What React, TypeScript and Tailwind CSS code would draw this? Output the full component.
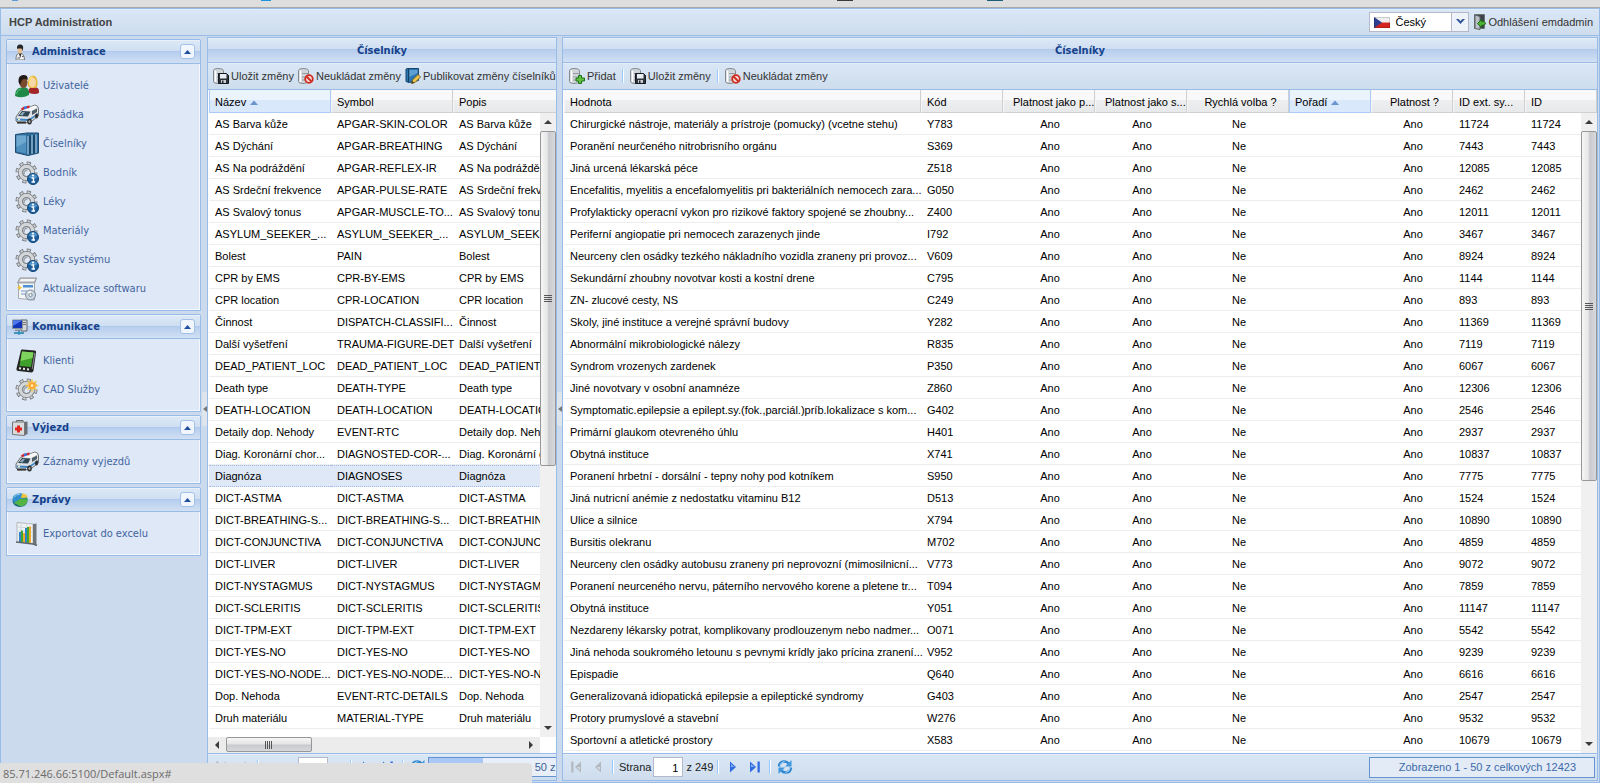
import React, { useState } from 'react';

const PANEL_HEADER =
  'bg-[linear-gradient(to_bottom,#f3f8fd_0px,#dce8f6_1px,#cfdff1_11px,#a9c4eb_11px,#b7ceee_12px,#d1e0f3_100%)]';
const TOOLBAR = 'bg-[linear-gradient(to_bottom,#eef4fb_0px,#d9e6f5_1px,#cedded_100%)]';

/* ---------- icons ---------- */

function UsersIcon() {
  return (
    <svg width="24" height="24" viewBox="0 0 24 24">
      <path d="M13 19 Q13 13 18.500 13 Q24 13 24 17 V19 Q20 21 14 19Z" fill="#a3262a" />
      <path d="M13 12 Q12 2 18 1.500 Q23 2 22.500 11 L21 14 H15Z" fill="#e8b83c" />
      <ellipse cx="17.500" cy="8.500" rx="3.500" ry="5" fill="#f7d9a8" />
      <path d="M14 8 Q14 2 18 2 Q15.500 5 15 9Z" fill="#f9e07a" />
      <path d="M0 22 Q0 14 6 13.500 L11 13.500 Q14.500 15 14 21 Q7 25 0 22Z" fill="#1f8a48" />
      <path d="M1.500 20 Q2 15.500 6 15" fill="none" stroke="#5cc27c" />
      <ellipse cx="8.500" cy="8.500" rx="4" ry="5.500" fill="#7a4a2c" />
      <path d="M3.500 8 Q3 1 8.500 1 Q13.500 1 12.500 6 Q9 4 7 6 L5 11Z" fill="#221a17" />
    </svg>
  );
}

function AmbulanceIcon() {
  return (
    <svg width="24" height="24" viewBox="0 0 24 24">
      <path d="M1 14 L5.500 7.500 L20 2 Q23.500 2.500 23.500 6 V13 L15 19.500 L3 20 Q0 19 1 14Z" fill="#dfe2e4" stroke="#6e7275" />
      <path d="M8 6.500 L20 2.500 L22.500 4 L15.500 8Z" fill="#f7f8f9" />
      <path d="M3 13 L7 8 L15.500 8.500 L13 13.500Z" fill="#2f4656" />
      <path d="M4.500 12 L7.500 9 L10 9 L7.500 12.500Z" fill="#8fa9b8" />
      <path d="M17 8 L22 5.500 V9 L17 12Z" fill="#4d5c66" />
      <path d="M1.500 15.500 L14 16 L23 10 V12 L14 18 L1.500 17.500Z" fill="#3a84c4" />
      <path d="M6 5.500 L9 3.500 V6 L7 7.500Z" fill="#d3272b" />
      <path d="M9 3.500 L12 3 V5.500 L9 6.500Z" fill="#3f6fd0" />
      <path d="M12 3 L14.500 2.500 V5 L12 5.500Z" fill="#d3272b" />
      <ellipse cx="14.500" cy="18.500" rx="2.300" ry="3" fill="#2c2c2c" />
      <ellipse cx="14.500" cy="18.500" rx="1" ry="1.500" fill="#aaa" />
      <ellipse cx="21.500" cy="13" rx="1.500" ry="2.500" fill="#2c2c2c" />
      <path d="M2 19.500 H11" stroke="#333" strokeWidth="2" />
      <circle cx="4" cy="16.500" r="1" fill="#fff6c0" />
    </svg>
  );
}

function BooksIcon() {
  return (
    <svg width="24" height="24" viewBox="0 0 24 24">
      <path d="M0.500 2.500 L12 1 L23.500 1 V21 L13 23.500 L0.500 20.500Z" fill="#2f6f9f" stroke="#1c4a70" />
      <path d="M1.500 3.500 L11 3.500 V21.500 L1.500 19.500Z" fill="#4f90bf" />
      <path d="M1.500 3.500 L11 3.500 V10 L1.500 15Z" fill="#6fa9d0" />
      <path d="M13 4 V22.500 M17 3 V21.800 M21 2.500 V21" stroke="#b4d2e6" />
      <path d="M15 3.500 V22.500 M19 3 V21.500" stroke="#153d5e" strokeWidth="1.500" />
    </svg>
  );
}

function Gear() {
  return (
    <>
      <circle cx="11.500" cy="11.500" r="9" fill="none" stroke="#6f7377" strokeWidth="4" strokeDasharray="3.800 3.268" />
      <circle cx="11.500" cy="11.500" r="8.500" fill="none" stroke="#cfd2d4" strokeWidth="3.500" strokeDasharray="2.200 4.475" strokeDashoffset="-0.700" />
      <circle cx="11.500" cy="11.500" r="6" fill="none" stroke="#74787c" strokeWidth="5" />
      <circle cx="11.500" cy="11.500" r="6" fill="none" stroke="#d3d6d8" strokeWidth="3.600" />
      <circle cx="11.500" cy="11.500" r="4" fill="#dfe8f6" stroke="#6f7377" />
      <path d="M9 13.500 Q8.500 9.500 12.500 9" fill="none" stroke="#9da2a6" strokeWidth="1.500" />
    </>
  );
}

function GearInfoIcon() {
  return (
    <svg width="24" height="24" viewBox="0 0 24 24">
      <Gear />
      <circle cx="18" cy="18" r="5.500" fill="#1d5f9c" stroke="#0f4577" />
      <path d="M13.500 16.500 Q15 13 18 13 Q21.500 13 22.500 16.500 Q18 18.500 13.500 16.500Z" fill="#4f92c9" />
      <path d="M16.500 17 H18.500 V21 M16.500 21 H20" stroke="#fff" strokeWidth="1.500" fill="none" />
      <circle cx="18" cy="14.500" r="1.100" fill="#fff" />
    </svg>
  );
}

function GearStarIcon() {
  return (
    <svg width="24" height="24" viewBox="0 0 24 24">
      <Gear />
      <path d="M17 0.500 L18.500 4 L22 2.500 L20.500 6 L24 7.500 L20.500 9 L22 12.500 L18.500 11 L17 14.500 L15.500 11 L12 12.500 L13.500 9 L10 7.500 L13.500 6 L12 2.500 L15.500 4Z" fill="#f7c343" opacity="0.900" />
      <circle cx="17" cy="7.500" r="3" fill="#ff9f2e" />
      <circle cx="17" cy="7.500" r="1.500" fill="#ffe9a0" />
    </svg>
  );
}

function PackageIcon() {
  return (
    <svg width="24" height="24" viewBox="0 0 24 24">
      <path d="M2.500 6 L5 1 H21.500 L19.500 6Z" fill="#c9cdd0" stroke="#8f9396" />
      <path d="M6 2 H20 L19 4 H5Z" fill="#f4f5f6" />
      <path d="M3.500 6 H19.500 V23 L3.500 21.500Z" fill="#f4f6f8" stroke="#a4a8ab" />
      <path d="M8 8 H18 V10.500 H8Z" fill="#4d8fd0" />
      <path d="M6 14 H12 M6 17 H11" stroke="#9ab8d8" strokeWidth="1.500" />
      <path d="M4.500 8 L5.500 10 L7.500 10.500 L5.500 11.500 L4.500 13.500 L3.500 11.500 L2 10.500 L3.500 10Z" fill="#f3c233" />
      <circle cx="15.500" cy="18" r="5" fill="#c9d5e0" stroke="#7c8b98" />
      <path d="M12.500 15.500 Q14 14 16 14 L15.500 18Z" fill="#fff" />
      <circle cx="15.500" cy="18" r="1.600" fill="#fff" stroke="#7c8b98" />
    </svg>
  );
}

function PdaIcon() {
  return (
    <svg width="24" height="24" viewBox="0 0 24 24">
      <path d="M6 1 Q6.300 0.300 7.500 0.500 L20 1.500 Q21.500 2 21 3.500 L18.500 21.500 Q18 23.500 16.500 23.500 L3.500 22 Q1 21.500 1.500 19.500Z" fill="#232625" />
      <path d="M7 2.500 L18.500 3.500 L16 18 L4.500 17Z" fill="#3f9f2a" />
      <path d="M7 2.500 L18.500 3.500 L17.500 9 L5.500 12Z" fill="#7ed35e" />
      <path d="M4 19.300 L6 19.500 M8 19.800 L10 20 M12 20.300 L14 20.500" stroke="#e6e6e6" strokeWidth="2" />
      <path d="M19.800 4 L17.200 20" stroke="#8b8f8e" />
    </svg>
  );
}

function ChartIcon() {
  return (
    <svg width="24" height="24" viewBox="0 0 24 24">
      <path d="M2 0.500 L18 2 V21.500 L2 20Z" fill="#f0f3f5" stroke="#b2b8bd" />
      <path d="M18 2 L21.500 1.500 V23 L18 21.500Z" fill="#6f7579" />
      <path d="M2 5 L18 6 M2 9 L18 10 M2 13 L18 14 M6 1 V20 M12 1 V20" stroke="#d0d7dc" />
      <path d="M4 10 H6 V20 H4Z M10 6 H12 V20.800 H10Z" fill="#2f83c7" />
      <path d="M6 8.500 H8 V20.500 H6Z M12 5 H14 V21 H12Z" fill="#3fa535" />
      <path d="M8 11 H10 V20.500 H8Z M14 4.500 H16 V21.500 H14Z" fill="#ecaa2c" />
      <path d="M1 20 L18 22 L22 23.500" fill="none" stroke="#5f6569" strokeWidth="1.500" />
    </svg>
  );
}

function DoctorIcon() {
  return (
    <svg width="16" height="16" viewBox="0 0 16 16">
      <path d="M4 16 Q3.500 9.500 8 9 Q12.500 9.500 12.500 16Z" fill="#f2f2f2" stroke="#777" />
      <path d="M7 9.500 L8.200 14 L9.500 9.500Z" fill="#222" />
      <path d="M5.500 14 H8 M10 12.500 H11.500" stroke="#555" />
      <ellipse cx="8" cy="6.500" rx="2.500" ry="3" fill="#e8bf95" />
      <path d="M5 5 Q4.500 0.500 8 0.500 Q12 0.500 11 5 L10.500 7 L9.500 4.500 H6Z" fill="#25272b" />
    </svg>
  );
}

function NetworkIcon() {
  return (
    <svg width="16" height="16" viewBox="0 0 16 16">
      <path d="M9 1 H15 V12 H9Z" fill="#d4d7da" stroke="#5f656b" />
      <path d="M11 3.500 H14 M11 5.500 H14" stroke="#777" />
      <path d="M0.500 1 H10.500 V9.500 H0.500Z" fill="#1334b8" stroke="#8b9299" />
      <path d="M1 1.500 H10 L1 7Z" fill="#4b78ee" />
      <path d="M3 10.500 H8 V12 H3Z" fill="#8a9096" />
      <path d="M2 14 H12 M7 12 V15.500" stroke="#237ba8" strokeWidth="1.500" />
      <circle cx="7" cy="14" r="1.600" fill="#2b95c4" />
    </svg>
  );
}

function FirstAidIcon() {
  return (
    <svg width="16" height="16" viewBox="0 0 16 16">
      <path d="M4.500 2.500 V0.500 H11 V2.500" fill="none" stroke="#666" />
      <path d="M12 2 L15.500 1.500 V14 L12 15.500Z" fill="#6a6f73" />
      <path d="M0.500 2 H12.500 V15.500 L0.500 14.500Z" fill="#d9dbdd" stroke="#777" />
      <path d="M5 5.500 H8 V7.500 H10 V10.500 H8 V12.500 H5 V10.500 H3 V7.500 H5Z" fill="#e0261f" />
    </svg>
  );
}

function PieIcon() {
  return (
    <svg width="16" height="16" viewBox="0 0 16 16">
      <ellipse cx="8" cy="9" rx="7.500" ry="6" fill="#1c6a7a" />
      <ellipse cx="8" cy="7" rx="7.500" ry="5.800" fill="#2f8ecb" />
      <path d="M8 7 L15.500 6 Q16 11 9 13 L3 11.500Z" fill="#3fa63c" />
      <path d="M8 7 L2 11 L9 14.500 Q15.500 13 15.500 8Z" fill="#54b444" />
      <path d="M9 6 L10 1.500 Q15.500 2 15.500 5.500Z" fill="#f2c33b" />
      <path d="M2 5.500 Q4 2 8 2" fill="none" stroke="#9fd4f2" />
    </svg>
  );
}

function DatabaseShape() {
  return (
    <>
      <path d="M0.500 2.500 Q0.500 0.500 5 0.500 Q10.500 0.500 10.500 2.500 V13.500 Q9 15.500 5 15.500 Q0.500 15.500 0.500 13.500Z" fill="#d0d5d9" stroke="#838b91" />
      <path d="M2.500 2.500 V14" stroke="#fff" strokeWidth="1.500" />
      <path d="M4 5.500 H10 M4 9 H10 M4 12 H10" fill="none" stroke="#949ca2" />
    </>
  );
}

function AddIcon() {
  return (
    <svg width="16" height="16" viewBox="0 0 16 16" className="shrink-0">
      <DatabaseShape />
      <path d="M9.500 7.500 H12.500 V10 H15.500 V13 H12.500 V15.500 H9.500 V13 H7 V10 H9.500Z" fill="#5fc33f" stroke="#23701a" />
    </svg>
  );
}

function SaveIcon() {
  return (
    <svg width="16" height="16" viewBox="0 0 16 16" className="shrink-0">
      <DatabaseShape />
      <path d="M5.500 5.500 H13.500 L15.500 7.500 V15.500 H5.500Z" fill="#2d333b" stroke="#15181c" />
      <path d="M7 6 H13.500 V10.500 H7Z" fill="#e8eef3" />
      <path d="M8 12 H13 V15 H8Z" fill="#c7ccd0" />
      <path d="M9 12.500 H10.500 V15 H9Z" fill="#2a2f36" />
    </svg>
  );
}

function CancelIcon() {
  return (
    <svg width="16" height="16" viewBox="0 0 16 16" className="shrink-0">
      <DatabaseShape />
      <circle cx="11" cy="11" r="3.800" fill="#f7d9d5" stroke="#cf2a1e" strokeWidth="1.800" />
      <path d="M8.500 8.500 L13.500 13.500" stroke="#cf2a1e" strokeWidth="1.800" />
    </svg>
  );
}

function PublishIcon() {
  return (
    <svg width="16" height="16" viewBox="0 0 16 16" className="shrink-0">
      <path d="M1 1 L3 0.500 H13.500 V12.500 L4 14.500 L1 13.500Z" fill="#2b76b0" stroke="#17456c" />
      <path d="M3.500 1 V14" stroke="#153f63" />
      <path d="M4.500 2 H12.500 V5 L4.500 9Z" fill="#5c9fd0" />
      <path d="M6.500 15.500 L7.500 12 L13 6.500 L15.500 9 L10 14.500Z" fill="#f0c64a" stroke="#7f6620" />
      <path d="M6.500 15.500 L7.200 13 L9 14.800Z" fill="#333" />
    </svg>
  );
}

function LogoutIcon() {
  return (
    <svg width="12" height="16" viewBox="0 0 12 16" className="shrink-0">
      <path d="M0.500 0.500 H10.500 V14.500 H0.500Z" fill="#3d4348" stroke="#6c7379" />
      <path d="M1 1 L6 2.500 V15.500 L1 14.500Z" fill="#b9c0c6" stroke="#5a6167" />
      <path d="M11.500 10 Q11 6.500 7.500 7.500 V5.500 L3.500 9.500 L7.500 13.500 V11.500 Q10 11 11.500 10Z" fill="#4bb234" stroke="#1f6a17" />
    </svg>
  );
}

function CzechFlag() {
  return (
    <svg width="16" height="11" viewBox="0 0 16 11" className="shrink-0">
      <path d="M0 0 H16 V5.500 H0Z" fill="#efefef" />
      <path d="M0 5.500 H16 V11 H0Z" fill="#d3241f" />
      <path d="M0 0 L8 5.500 L0 11Z" fill="#2f3f8f" />
      <path d="M0.500 0.500 H15.500 V10.500 H0.500Z" fill="none" stroke="#000" opacity="0.150" />
    </svg>
  );
}

function RefreshIcon() {
  return (
    <svg width="16" height="16" viewBox="0 0 16 16">
      <path d="M2 7.500 Q2.500 2.500 7.500 2.500 Q10 2.500 11.500 4.500" fill="none" stroke="#2f86cf" strokeWidth="2.600" />
      <path d="M14.500 1 V7.500 H8Z" fill="#3f97dc" />
      <path d="M14 8.500 Q13.500 13.500 8.500 13.500 Q6 13.500 4.500 11.500" fill="none" stroke="#2f86cf" strokeWidth="2.600" />
      <path d="M1.500 15 V8.500 H8Z" fill="#3f97dc" />
      <path d="M3 7 Q3.500 3 7.500 2.500 M13 9 Q12.500 13 8.500 13.500" fill="none" stroke="#a9d8f7" />
    </svg>
  );
}

function PageIcon({ back, bar, disabled }: { back?: boolean; bar?: boolean; disabled?: boolean }) {
  const fill = disabled ? '#b3b9c1' : '#2f6be0';
  return (
    <svg width="12" height="12" viewBox="0 0 12 12" className={back ? 'rotate-180' : ''}>
      <path d={bar ? 'M1 0.500 L7 6 L1 11.500Z' : 'M3 0.500 L9 6 L3 11.500Z'} fill={fill} />
      <path d={bar ? 'M2 3 L5.500 6 H2Z' : 'M4 3 L7.500 6 H4Z'} fill="#fff" opacity="0.450" />
      {bar && <path d="M8.500 0.500 H10.800 V11.500 H8.500Z" fill={fill} />}
    </svg>
  );
}

/* ---------- data ---------- */

const groups = [
  {
    title: 'Administrace',
    icon: DoctorIcon,
    items: [
      { label: 'Uživatelé', icon: UsersIcon },
      { label: 'Posádka', icon: AmbulanceIcon },
      { label: 'Číselníky', icon: BooksIcon },
      { label: 'Bodník', icon: GearInfoIcon },
      { label: 'Léky', icon: GearInfoIcon },
      { label: 'Materiály', icon: GearInfoIcon },
      { label: 'Stav systému', icon: GearInfoIcon },
      { label: 'Aktualizace softwaru', icon: PackageIcon },
    ],
  },
  {
    title: 'Komunikace',
    icon: NetworkIcon,
    items: [
      { label: 'Klienti', icon: PdaIcon },
      { label: 'CAD Služby', icon: GearStarIcon },
    ],
  },
  { title: 'Výjezd', icon: FirstAidIcon, items: [{ label: 'Záznamy vyjezdů', icon: AmbulanceIcon }] },
  { title: 'Zprávy', icon: PieIcon, items: [{ label: 'Exportovat do excelu', icon: ChartIcon }] },
];

const codebooks = [
  ['AS Barva kůže', 'APGAR-SKIN-COLOR'],
  ['AS Dýchání', 'APGAR-BREATHING'],
  ['AS Na podráždění', 'APGAR-REFLEX-IR'],
  ['AS Srdeční frekvence', 'APGAR-PULSE-RATE'],
  ['AS Svalový tonus', 'APGAR-MUSCLE-TO...'],
  ['ASYLUM_SEEKER_...', 'ASYLUM_SEEKER_...'],
  ['Bolest', 'PAIN'],
  ['CPR by EMS', 'CPR-BY-EMS'],
  ['CPR location', 'CPR-LOCATION'],
  ['Činnost', 'DISPATCH-CLASSIFI...'],
  ['Další vyšetření', 'TRAUMA-FIGURE-DET'],
  ['DEAD_PATIENT_LOC', 'DEAD_PATIENT_LOC'],
  ['Death type', 'DEATH-TYPE'],
  ['DEATH-LOCATION', 'DEATH-LOCATION'],
  ['Detaily dop. Nehody', 'EVENT-RTC'],
  ['Diag. Koronární chor...', 'DIAGNOSTED-COR-...'],
  ['Diagnóza', 'DIAGNOSES'],
  ['DICT-ASTMA', 'DICT-ASTMA'],
  ['DICT-BREATHING-S...', 'DICT-BREATHING-S...'],
  ['DICT-CONJUNCTIVA', 'DICT-CONJUNCTIVA'],
  ['DICT-LIVER', 'DICT-LIVER'],
  ['DICT-NYSTAGMUS', 'DICT-NYSTAGMUS'],
  ['DICT-SCLERITIS', 'DICT-SCLERITIS'],
  ['DICT-TPM-EXT', 'DICT-TPM-EXT'],
  ['DICT-YES-NO', 'DICT-YES-NO'],
  ['DICT-YES-NO-NODE...', 'DICT-YES-NO-NODE...'],
  ['Dop. Nehoda', 'EVENT-RTC-DETAILS'],
  ['Druh materiálu', 'MATERIAL-TYPE'],
];

// value, code, id
const values = [
  ['Chirurgické nástroje, materiály a prístroje (pomucky) (vcetne stehu)', 'Y783', '11724'],
  ['Poranění neurčeného nitrobrisního orgánu', 'S369', '7443'],
  ['Jiná urcená lékarská péce', 'Z518', '12085'],
  ['Encefalitis, myelitis a encefalomyelitis pri bakteriálních nemocech zara...', 'G050', '2462'],
  ['Profylakticky operacní vykon pro rizikové faktory spojené se zhoubny...', 'Z400', '12011'],
  ['Periferní angiopatie pri nemocech zarazenych jinde', 'I792', '3467'],
  ['Neurceny clen osádky tezkého nákladního vozidla zraneny pri provoz...', 'V609', '8924'],
  ['Sekundární zhoubny novotvar kosti a kostní drene', 'C795', '1144'],
  ['ZN- zlucové cesty, NS', 'C249', '893'],
  ['Skoly, jiné instituce a verejné správní budovy', 'Y282', '11369'],
  ['Abnormální mikrobiologické nálezy', 'R835', '7119'],
  ['Syndrom vrozenych zardenek', 'P350', '6067'],
  ['Jiné novotvary v osobní anamnéze', 'Z860', '12306'],
  ['Symptomatic.epilepsie a epilept.sy.(fok.,parciál.)príb.lokalizace s kom...', 'G402', '2546'],
  ['Primární glaukom otevreného úhlu', 'H401', '2937'],
  ['Obytná instituce', 'X741', '10837'],
  ['Poranení hrbetní - dorsální - tepny nohy pod kotníkem', 'S950', '7775'],
  ['Jiná nutricní anémie z nedostatku vitaminu B12', 'D513', '1524'],
  ['Ulice a silnice', 'X794', '10890'],
  ['Bursitis olekranu', 'M702', '4859'],
  ['Neurceny clen osádky autobusu zraneny pri neprovozní (mimosilnicní...', 'V773', '9072'],
  ['Poranení neurceného nervu, páterního nervového korene a pletene tr...', 'T094', '7859'],
  ['Obytná instituce', 'Y051', '11147'],
  ['Nezdareny lékarsky potrat, komplikovany prodlouzenym nebo nadmer...', 'O071', '5542'],
  ['Jiná nehoda soukromého letounu s pevnymi krídly jako prícina zranení...', 'V952', '9239'],
  ['Epispadie', 'Q640', '6616'],
  ['Generalizovaná idiopatická epilepsie a epileptické syndromy', 'G403', '2547'],
  ['Protory prumyslové a stavební', 'W276', '9532'],
  ['Sportovní a atletické prostory', 'X583', '10679'],
];

/* ---------- pieces ---------- */

function Arrow({ dir }: { dir: 'up' | 'down' | 'left' | 'right' }) {
  const paths = { up: 'M0 6 L4 2 L8 6Z', down: 'M0 2 L4 6 L8 2Z', left: 'M6 0 L2 4 L6 8Z', right: 'M2 0 L6 4 L2 8Z' };
  return (
    <svg width="8" height="8" viewBox="0 0 8 8">
      <path d={paths[dir]} fill="#3c3c3c" />
    </svg>
  );
}

function VerticalScrollbar({ share, className }: { share: number; className: string }) {
  return (
    <div className={`absolute top-[23px] right-0 w-4 flex flex-col bg-[#f0f0f0] ${className}`}>
      <div className="h-[18px] flex items-center justify-center"><Arrow dir="up" /></div>
      <div className="flex-1">
        <div
          className="flex flex-col items-center justify-center gap-px rounded-[2px] border border-[#979797] bg-[linear-gradient(to_right,#f6f6f6,#e6e6e7_45%,#c9cace_55%,#d8d9dc)]"
          style={{ height: `${share}%` }}
        >
          <span className="w-2 h-px bg-[#555]" />
          <span className="w-2 h-px bg-[#555]" />
          <span className="w-2 h-px bg-[#555]" />
          <span className="w-2 h-px bg-[#555]" />
        </div>
      </div>
      <div className="h-[18px] flex items-center justify-center"><Arrow dir="down" /></div>
    </div>
  );
}

function HorizontalScrollbar({ share }: { share: number }) {
  return (
    <div className="absolute bottom-0 inset-x-0 flex h-4 bg-white">
      <div className="flex flex-1 bg-[#ececec]">
        <div className="w-[18px] flex items-center justify-center"><Arrow dir="left" /></div>
        <div className="flex-1">
          <div
            className="h-[15px] flex items-center justify-center gap-px rounded-[2px] border border-[#979797] bg-[linear-gradient(to_bottom,#f6f6f6,#e6e6e7_45%,#c9cace_55%,#d8d9dc)]"
            style={{ width: `${share}%` }}
          >
            <span className="h-2 w-px bg-[#555]" />
            <span className="h-2 w-px bg-[#555]" />
            <span className="h-2 w-px bg-[#555]" />
            <span className="h-2 w-px bg-[#555]" />
          </div>
        </div>
        <div className="w-[18px] flex items-center justify-center"><Arrow dir="right" /></div>
      </div>
      <div className="w-4" />
    </div>
  );
}

function Th({ children, center, sorted }: { children: React.ReactNode; center?: boolean; sorted?: boolean }) {
  return (
    <th
      scope="col"
      aria-sort={sorted ? 'ascending' : undefined}
      className={`h-[23px] pt-[2px] pb-0 pr-1 font-normal border-x border-b whitespace-nowrap ${center ? 'text-center pl-[9px]' : 'text-left pl-[5px]'} ${
        sorted
          ? 'border-[#aaccf6] bg-[linear-gradient(to_bottom,#ebf3fd_45%,#d9e8fb_45%)]'
          : 'border-l-[#f6f6f6] border-r-[#d0d0d0] border-b-[#d0d0d0] bg-[linear-gradient(to_bottom,#f9f9f9_45%,#eeeff0_45%,#e8e9ea)]'
      }`}
    >
      {children}
      {sorted && (
        <svg width="8" height="5" viewBox="0 0 8 5" className="inline ml-1">
          <path d="M0 5 L4 0.500 L8 5Z" fill="#6a94cf" />
        </svg>
      )}
    </th>
  );
}

function Td({ children, center, selected }: { children?: React.ReactNode; center?: boolean; selected?: boolean }) {
  return (
    <td
      className={`h-[22px] pb-0 pr-0 whitespace-nowrap ${center ? 'pl-[2px] text-center' : 'pl-[6px]'} ${
        selected ? 'pt-px bg-[#dfe8f6] border-y border-dotted border-[#a3bae9]' : 'pt-[2px] border-b border-[#ededed]'
      }`}
    >
      {children}
    </td>
  );
}

function ToolButton({ icon: Icon, label }: { icon: () => React.ReactElement; label: string }) {
  return (
    <button type="button" className="flex items-center gap-[2px] shrink-0 whitespace-nowrap text-[#333]">
      <Icon />
      {label}
    </button>
  );
}

function Separator({ className = '' }: { className?: string }) {
  return <span className={`w-px h-[14px] shrink-0 bg-[#98c8ff] border-r border-white box-content ${className}`} />;
}

function PanelTitle() {
  return (
    <h2 className={`h-[25px] pt-px shrink-0 flex items-center justify-center border-b border-[#99bbe8] font-['DejaVu_Sans_Condensed','DejaVu_Sans',sans-serif] font-bold text-[11px] text-[#15428b] ${PANEL_HEADER}`}>
      Číselníky
    </h2>
  );
}

function Splitter({ className }: { className: string }) {
  return (
    <div className={`shrink-0 flex items-center justify-end ${className}`}>
      <button type="button" aria-label="Sbalit panel" className="w-[5px] h-[34px] flex items-center justify-center rounded-l-[2px] bg-[#dfe5ec]">
        <svg width="4" height="6" viewBox="0 0 4 6">
          <path d="M4 0 L0 3 L4 6Z" fill="#777" />
        </svg>
      </button>
    </div>
  );
}

function Pager({ id, pages, children }: { id: string; pages: string; children: React.ReactNode }) {
  const [page, setPage] = useState('1');
  return (
    <div className={`h-[27px] shrink-0 flex items-center border-t border-[#99bbe8] pl-[7px] pr-[2px] text-[#222] ${TOOLBAR}`}>
      <button type="button" aria-label="První strana" className="shrink-0"><PageIcon back bar disabled /></button>
      <button type="button" aria-label="Předchozí strana" className="ml-[10px] shrink-0"><PageIcon back disabled /></button>
      <Separator className="ml-2" />
      <label htmlFor={id} className="ml-[5px] pt-px">Strana</label>
      <input
        id={id}
        value={page}
        onChange={(e) => setPage(e.target.value)}
        className="ml-[2px] w-[30px] h-5 shrink-0 border border-[#b5b8c8] bg-white pr-1 pt-px text-right text-[11px] text-black"
      />
      <span className="ml-[3px] mr-1 pt-px shrink-0 whitespace-nowrap">{pages}</span>
      <Separator />
      <button type="button" aria-label="Další strana" className="ml-[8px] shrink-0"><PageIcon /></button>
      <button type="button" aria-label="Poslední strana" className="ml-[10px] shrink-0"><PageIcon bar /></button>
      <Separator className="ml-2" />
      <button type="button" aria-label="Obnovit" className="ml-[6px] shrink-0"><RefreshIcon /></button>
      {children}
    </div>
  );
}

function Sidebar() {
  return (
    <nav className="w-[200px] shrink-0 pl-[5px] pt-[3px] flex flex-col gap-[3px] font-['DejaVu_Sans_Condensed','DejaVu_Sans',sans-serif]">
      {groups.map(({ title, icon: GroupIcon, items }) => (
        <section key={title} className="border border-[#99bbe8] rounded-t-[2px]">
          <h2 className={`h-6 flex items-center gap-1 pl-[5px] pr-[5px] border-b border-[#99bbe8] font-bold text-[11px] text-[#15428b] ${PANEL_HEADER}`}>
            <GroupIcon />
            <span className="flex-1">{title}</span>
            <button type="button" aria-label={`Sbalit ${title}`} className="w-[15px] h-[15px] flex items-center justify-center rounded-[3px] border border-[#a3c0e8] bg-[#f1f6fc]">
              <svg width="7" height="4" viewBox="0 0 7 4">
                <path d="M3.500 0 L7 4 H0Z" fill="#1f4fa3" />
              </svg>
            </button>
          </h2>
          <ul className="pt-[7px] pb-[6px] pl-[7px] border border-t-0 border-[#f4f8fd] bg-[#dfe8f6]">
            {items.map(({ label, icon: Icon }) => (
              <li key={label}>
                <a href="#" className="h-[29px] flex items-center gap-1 text-[11px] text-[#3f659f]">
                  <Icon />
                  {label}
                </a>
              </li>
            ))}
          </ul>
        </section>
      ))}
    </nav>
  );
}

function CodebookPanel() {
  return (
    <section className="w-[350px] mt-px shrink-0 flex flex-col overflow-hidden border border-[#99bbe8] bg-white">
      <PanelTitle />
      <div className={`h-[27px] shrink-0 flex items-center gap-1 pl-[5px] overflow-hidden border-b border-[#99bbe8] ${TOOLBAR}`}>
        <ToolButton icon={SaveIcon} label="Uložit změny" />
        <ToolButton icon={CancelIcon} label="Neukládat změny" />
        <ToolButton icon={PublishIcon} label="Publikovat změny číselníků" />
      </div>
      <div className="relative flex-1 min-h-0 pl-px overflow-hidden">
        <table className="w-[366px] table-fixed border-separate border-spacing-0">
          <thead>
            <tr>
              <Th sorted>Název</Th>
              <Th>Symbol</Th>
              <Th>Popis</Th>
            </tr>
          </thead>
          <tbody>
            {codebooks.map(([name, symbol]) => {
              const selected = symbol === 'DIAGNOSES';
              return (
                <tr key={symbol}>
                  <Td selected={selected}>{name}</Td>
                  <Td selected={selected}>{symbol}</Td>
                  <Td selected={selected}>{name}</Td>
                </tr>
              );
            })}
          </tbody>
        </table>
        <VerticalScrollbar share={57} className="bottom-4" />
        <HorizontalScrollbar share={29} />
      </div>
      <Pager id="codebook-page" pages="z 2">
        <div className="ml-[2px] h-5 shrink-0 w-[225px] flex items-center border border-[#6593cf] bg-[linear-gradient(to_right,#a9c8f5_54px,#e8eff8_54px)] pl-[34px] whitespace-nowrap text-[#3e5f96]">
          Zobrazeno 1 - 50 z celkových 87
        </div>
      </Pager>
    </section>
  );
}

function ValuesPanel() {
  return (
    <section className="flex-1 min-w-0 mt-px flex flex-col border border-[#99bbe8] bg-white">
      <PanelTitle />
      <div className={`h-[27px] shrink-0 flex items-center pl-[6px] gap-[6px] border-b border-[#99bbe8] ${TOOLBAR}`}>
        <ToolButton icon={AddIcon} label="Přidat" />
        <Separator />
        <ToolButton icon={SaveIcon} label="Uložit změny" />
        <Separator />
        <ToolButton icon={CancelIcon} label="Neukládat změny" />
      </div>
      <div className="relative flex-1 min-h-0 pl-px overflow-hidden">
        <table className="w-full table-fixed border-separate border-spacing-0">
          <colgroup>
            <col />
            <col className="w-[82px]" />
            <col className="w-[92px]" />
            <col className="w-[92px]" />
            <col className="w-[102px]" />
            <col className="w-[82px]" />
            <col className="w-[82px]" />
            <col className="w-[72px]" />
            <col className="w-[72px]" />
          </colgroup>
          <thead>
            <tr>
              <Th>Hodnota</Th>
              <Th>Kód</Th>
              <Th center>Platnost jako p...</Th>
              <Th center>Platnost jako s...</Th>
              <Th center>Rychlá volba ?</Th>
              <Th sorted>Pořadí</Th>
              <Th center>Platnost ?</Th>
              <Th>ID ext. sy...</Th>
              <Th>ID</Th>
            </tr>
          </thead>
          <tbody>
            {values.map(([value, code, id]) => (
              <tr key={id}>
                <Td>{value}</Td>
                <Td>{code}</Td>
                <Td center>Ano</Td>
                <Td center>Ano</Td>
                <Td center>Ne</Td>
                <Td />
                <Td center>Ano</Td>
                <Td>{id}</Td>
                <Td>{id}</Td>
              </tr>
            ))}
          </tbody>
        </table>
        <VerticalScrollbar share={58} className="bottom-0" />
      </div>
      <Pager id="values-page" pages="z 249">
        <div className="ml-auto h-[21px] w-[226px] flex items-center justify-end border border-[#6593cf] bg-[#e2ebf6] pr-[18px] whitespace-nowrap text-[#3e6aaa]">
          Zobrazeno 1 - 50 z celkových 12423
        </div>
      </Pager>
    </section>
  );
}

export default function App() {
  return (
    <div className="h-screen flex flex-col overflow-hidden bg-[#dedede] font-['Liberation_Sans',Arial,sans-serif] text-[11px] leading-[13px] text-black">
      <div className="h-2 shrink-0 flex items-start border-b border-[#a9a9a9]">
        <span className="ml-3 w-[6px] h-px bg-[#5b9bd5]" />
        <span className="ml-[243px] w-[10px] h-px bg-[#1b97e0]" />
        <span className="ml-[566px] w-4 h-px bg-[#3b3b3b]" />
        <span className="ml-[134px] w-4 h-px bg-[#1d5c78]" />
      </div>

      <div className="flex-1 min-h-0 flex flex-col border border-[#99bbe8]">
        <header className={`h-[27px] shrink-0 flex items-center pl-2 pr-[6px] border-b border-[#99bbe8] ${TOOLBAR}`}>
          <h1 className="flex-1 font-bold text-[#444]">HCP Administration</h1>
          <div className="w-[100px] h-5 flex items-center border border-[#b5b8c8] bg-white">
            <span className="ml-[4px]"><CzechFlag /></span>
            <select aria-label="Jazyk" defaultValue="cs" className="flex-1 min-w-0 ml-[5px] pt-px appearance-none bg-white text-[11px] text-black">
              <option value="cs">Český</option>
              <option value="en">English</option>
            </select>
            <span className="w-[17px] h-full flex items-center justify-center border-l border-[#b5b8c8] bg-[#eef3fa]">
              <svg width="9" height="6" viewBox="0 0 9 6">
                <path d="M0 0 H2.500 L4.500 2 L6.500 0 H9 L4.500 5Z" fill="#2f5597" />
              </svg>
            </span>
          </div>
          <a href="#" className="ml-[5px] flex items-center gap-[2px] text-[#333]">
            <LogoutIcon />
            Odhlášení emdadmin
          </a>
        </header>

        <main className="flex-1 min-h-0 flex pr-px pb-px bg-[#cbdaed]">
          <Sidebar />
          <Splitter className="w-[6px]" />
          <CodebookPanel />
          <Splitter className="w-[5px]" />
          <ValuesPanel />
        </main>
      </div>

      <div className="fixed bottom-0 left-0 w-[532px] h-5 flex items-center pl-[3px] rounded-tr-[4px] bg-[#dfdfdf] font-['Open_Sans',sans-serif] text-[11px] text-[#6b6b6b]">
        85.71.246.66:5100/Default.aspx#
      </div>
    </div>
  );
}
